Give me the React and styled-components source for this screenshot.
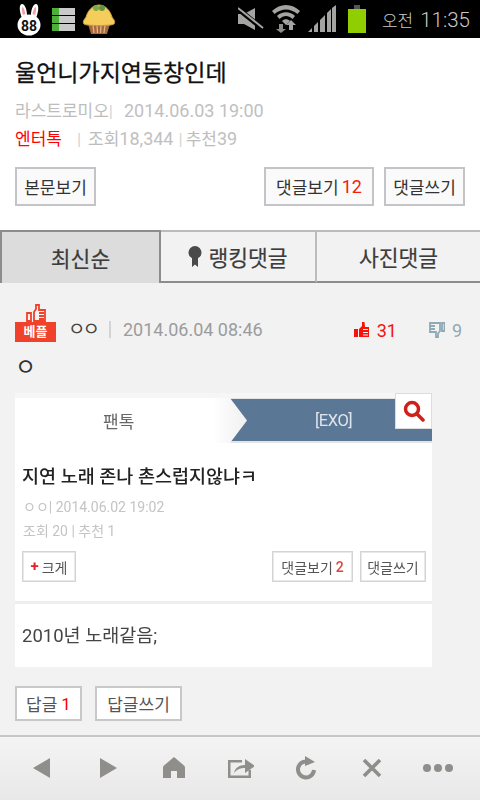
import React from 'react';
import styled, { createGlobalStyle } from 'styled-components';

const Global = createGlobalStyle`
  html, body { margin: 0; padding: 0; background: #f2f2f2; }
  body { width: 480px; height: 800px; overflow: hidden; font-family: Roboto, "Noto Sans CJK KR", sans-serif; }
  * { box-sizing: border-box; }
`;
const Page = styled.div`display: flex; flex-direction: column; width: 480px; height: 800px; background: #f2f2f2;`;

const StatusBar = styled.div`height: 38px; background: #000; display: flex; align-items: center; justify-content: space-between; padding: 0 10px 0 16px; flex: none;`;
const StatusGroup = styled.div`display: flex; align-items: center; gap: ${p => p.$gap}px;`;
const Clock = styled.div`color: #c9c9c9; font: 300 20.5px Roboto, "Noto Sans CJK KR", sans-serif; margin-left: 8px; white-space: nowrap;`;
const Clock1 = styled.span`font-size: 17px; margin-right: 7px;`;
const Stack = styled.div`display: flex; flex-direction: column; gap: 1px; width: 23px; margin: 0 7px 0 10px;`;
const StackRow = styled.div`height: 7px; background: linear-gradient(90deg, #4cb03a 0 7px, #c9c9c9 7px);`;
const BatterySlot = styled.div`display: flex; margin-left: 4px;`;

const Header = styled.header`background: #fff; padding: 20px 15px 0; height: 192px; flex: none;`;
const Title = styled.h1`margin: 0; font-size: 23px; font-weight: 400; line-height: 32px; color: #111; -webkit-text-stroke: 0.3px #111; white-space: nowrap;`;
const Meta = styled.div`margin-top: ${p => p.$top}px; font-size: 17px; line-height: 24px; color: #bdbdbd; white-space: nowrap; display: flex; align-items: baseline;`;
const Num = styled.span`font-size: 18px; color: #c0c0c0;`;
const Red = styled.span`color: #f00;`;
const Sep = styled.span`margin: ${p => p.$m}; color: #d4d4d4;`;
const ButtonRow = styled.div`display: flex; margin-top: 16px; gap: 10px;`;
const Btn = styled.div`height: 39px; width: ${p => p.$w}px; margin-right: ${p => p.$after || 0}px; border: 2px solid #c4c4c8; background: #fafafa; font-size: 17px; color: #333; display: flex; align-items: center; justify-content: center; white-space: nowrap;`;
const RedNum = styled.span`color: #f5200a; font-size: 18px; margin-left: 3px;`;

const Tabs = styled.nav`display: flex; height: 53px; flex: none;`;
const Tab = styled.div`
  width: ${p => p.$w}px; display: flex; align-items: center; justify-content: center; gap: 6px;
  font-size: 21.5px; color: #3c3c3c; white-space: nowrap; -webkit-text-stroke: 0.2px #3c3c3c;
  border-top: 2px solid ${p => p.$active ? '#8c8c8c' : '#bcbcbc'};
  border-right: 2px solid ${p => p.$active ? '#8c8c8c' : '#bcbcbc'};
  border-left: ${p => p.$active ? '2px solid #8c8c8c' : 'none'};
  border-bottom: ${p => p.$active ? 'none' : '2px solid #8c8c8c'};
  background: ${p => p.$active ? '#dcdcdc' : '#f2f2f2'};
  &:last-child { border-right: none; }
`;

const Comment = styled.section`flex: 1; padding: 19px 15px 0; min-height: 0;`;
const CommentHead = styled.div`display: flex; align-items: flex-end; height: 40px;`;
const BadgeWrap = styled.div`display: flex; flex-direction: column; align-items: center; width: 41px;`;
const Badge = styled.div`width: 41px; height: 20px; background: #f0412a; color: #fff; font-size: 13px; font-weight: 700; line-height: 20px; text-align: center;`;
const Author = styled.div`margin-left: 12px; font-size: 19px; line-height: 24px; color: #444; letter-spacing: -3px;`;
const HeadSep = styled.div`width: 2px; height: 17px; background: #d4d4d4; margin: 0 12px 4px 12px;`;
const HeadDate = styled.div`font-size: 18px; line-height: 24px; color: #9c9c9c; white-space: nowrap;`;
const Votes = styled.div`margin-left: auto; display: flex; align-items: center; height: 24px; padding-right: 3px;`;
const Vote = styled.div`display: flex; align-items: center; gap: 7px; font-size: 18px; color: ${p => p.$c}; margin-left: ${p => p.$ml || 0}px;`;
const Body = styled.div`margin: 10px 0 0 0; height: 32px; font-size: 23px; line-height: 32px; color: #333;`;

const Shot = styled.div`position: relative; width: 417px; height: 274px; margin-top: 9px; background: #fff; padding-top: 5px; filter: blur(0.5px); box-shadow: inset 0 5px 0 #f6f6f6;`;
const Crumb = styled.div`height: 45px; display: flex; border-top: 1px solid #e4e4e4; border-bottom: 2px solid #e4e4e4; position: relative; background: #5b7796;`;
const CrumbLeft = styled.div`width: 232px; background: linear-gradient(90deg, #fff, #fff 85%, #f0f0f0); clip-path: polygon(0 0, 215px 0, 100% 50%, 215px 100%, 0 100%); margin: -1px 0 -2px; display: flex; align-items: center; padding-left: 88px; font-size: 17px; color: #666;`;
const CrumbRight = styled.div`flex: 1; display: flex; align-items: center; padding-left: 68px; font-size: 16.5px; color: #dfe5ec; letter-spacing: -0.5px;`;
const SearchBox = styled.div`position: absolute; right: 0; top: 0; width: 37px; height: 36px; background: #fff; border: 1px solid #ddd; display: flex; align-items: center; justify-content: center;`;
const ShotTitle = styled.div`margin: 23px 0 0 7px; font-size: 18.5px; font-weight: 500; line-height: 22px; color: #222; white-space: nowrap;`;
const ShotMeta = styled.div`margin: ${p => p.$top}px 0 0 8px; font-size: 14px; line-height: 16px; color: #c4c4c4; white-space: nowrap;`;
const ShotBtns = styled.div`display: flex; margin: 12px 6px 0 7px; gap: 7px; align-items: center;`;
const ShotBtn = styled.div`height: 31px; width: ${p => p.$w}px; margin-right: ${p => p.$after || 0}px; border: 1px solid #d4d4d4; box-shadow: inset 0 0 0 1px #e8e8e8; font-size: 14px; color: #555; display: flex; align-items: center; justify-content: center; gap: 3px; white-space: nowrap;`;
const Plus = styled.span`color: #e0202a; font-weight: 700; font-size: 15px; line-height: 1;`;
const ShotNum = styled.span`color: #d9483a; font-weight: 500;`;
const ShotRule = styled.div`height: 3px; background: #eee; margin-top: 19px;`;
const ShotBody = styled.div`margin: 21px 0 0 7px; font-size: 18.5px; line-height: 22px; color: #444; white-space: nowrap;`;

const Replies = styled.div`display: flex; gap: 13px; margin-top: 19px;`;
const ReplyBtn = styled.div`height: 35px; width: ${p => p.$w}px; border: 2px solid #c8c8c8; background: #fff; font-size: 17px; color: #555; display: flex; align-items: center; justify-content: center; gap: 4px;`;

const BottomBar = styled.footer`height: 65px; flex: none; border-top: 2px solid #c6c6ca; background: linear-gradient(#f4f4f4, #e8e8e8); display: flex; align-items: center; padding: 0 8px 2px 9px;`;
const NavItem = styled.div`width: 66px; height: 34px; display: flex; align-items: center; justify-content: center;`;

const Rabbit = () => (
  <svg width="26" height="34" viewBox="0 0 26 34">
    <path d="M6 16C3 9 3 2 6 2s5 6 5 11zM20 16c3-7 3-14 0-14s-5 6-5 11z" fill="#fff" />
    <path d="M7 13C5.500 9 5.500 5 6.500 5S9 9 9.500 12zM19 13c1.500-4 1.500-8 .5-8S17 9 16.500 12z" fill="#f2a0a0" />
    <ellipse cx="13" cy="23" rx="11.500" ry="10.500" fill="#fff" />
    <text x="13" y="29" textAnchor="middle" fontSize="14" fontWeight="700" fontFamily="Roboto, sans-serif" fill="#111">88</text>
  </svg>
);
const Muffin = () => (
  <svg width="34" height="32" viewBox="0 0 34 32">
    <path d="M6 21h22l-3 10H9z" fill="#a9683a" />
    <path d="M11 22l1 8M15 22l.5 8M19 22l-.5 8M23 22l-1 8" stroke="#e0b58a" strokeWidth="1.300" />
    <path d="M2 21c-2-3 1-5 2-7C6 7 11 2 17 2s11 5 13 12c1 2 4 4 2 7-1 2-29 2-30 0z" fill="#f5cd5a" stroke="#c49a4a" strokeWidth="1" />
    <circle cx="14" cy="5" r="3" fill="#7ba84a" /><circle cx="20" cy="5" r="3" fill="#5f9440" />
  </svg>
);
const Mute = () => (
  <svg width="26" height="24" viewBox="0 0 26 24">
    <path d="M0 7h6l11-6v22L6 17H0z" fill="#a4a4a2" />
    <path d="M-1 1L25 22" stroke="#000" strokeWidth="5" /><path d="M0 1L25 21" stroke="#a4a4a2" strokeWidth="2" />
  </svg>
);
const Wifi = () => (
  <svg width="28" height="28" viewBox="0 0 28 28">
    <path d="M0 6C8-2 20-2 28 6l-2.500 3C18 3 10 3 2.500 9z" fill="#a4a4a2" />
    <path d="M5 11c5-5 13-5 18 0l-2.500 3c-4-4-9-4-13 0z" fill="#a4a4a2" />
    <path d="M10 16c2.500-2.500 5.500-2.500 8 0l-4 4z" fill="#a4a4a2" />
    <path d="M7 19h4v5h3l-5 4-5-4h3z" fill="#8c8c8a" /><path d="M19 15l5 5h-3v5h-4v-5h-3z" fill="#a4a4a2" />
  </svg>
);
const Signal = () => (
  <svg width="28" height="28" viewBox="0 0 28 28" fill="#a4a4a2">
    <path d="M0 27l4-4v4zM6 27v-6l4-4v10zM12 27V15l5-5v17zM19 27V8l4-4v23zM24 27V3l4-3v27z" />
  </svg>
);
const Battery = () => (
  <svg width="18" height="28" viewBox="0 0 18 28">
    <rect x="6" y="0" width="6" height="4" fill="#555" /><rect x="0" y="4" width="18" height="24" fill="#8fce00" />
  </svg>
);
const Ribbon = () => (
  <svg width="14" height="22" viewBox="0 0 14 22" fill="#4a4a4a">
    <circle cx="7" cy="6.500" r="6.500" /><path d="M4 12h6v9l-3-2.500L4 21z" />
  </svg>
);
const BigThumb = () => (
  <svg width="20" height="18" viewBox="0 0 20 18" fill="none" stroke="#f0412a" strokeWidth="1.800">
    <path d="M1 9h4v8H1zM8 8l2-3V1h3v5h6v11H8z" /><path d="M13 9h5M13 12h5M13 15h5" />
  </svg>
);
const ThumbUp = () => (
  <svg width="16" height="16" viewBox="0 0 16 16" fill="#f5120a">
    <path d="M0 7h4v8H0zM5 7l3-3V0h2.500l.5 5h4v10H5z" /><path d="M9 7.500h5M9 10.500h5M9 13h5" stroke="#f2f2f2" strokeWidth="1.200" />
  </svg>
);
const ThumbDown = () => (
  <svg width="16" height="16" viewBox="0 0 16 16" fill="none" stroke="#8fa9b5" strokeWidth="1.800">
    <path d="M1 1h10v8l-2 2.500V15H7v-5H1zM1 4h5M1 7h5M13 1h2.500v8H13z" />
  </svg>
);
const Magnifier = () => (
  <svg width="22" height="22" viewBox="0 0 22 22" fill="none" stroke="#d0201a" strokeWidth="3.500">
    <circle cx="9" cy="9" r="6.500" /><path d="M14 14l6 6" strokeLinecap="round" />
  </svg>
);
const G = '#8f8e8a';
const Prev = () => <svg width="20" height="22" viewBox="0 0 20 22" fill={G}><path d="M18 1v20L1 11z" /></svg>;
const Next = () => <svg width="20" height="22" viewBox="0 0 20 22" fill={G}><path d="M2 1v20l17-10z" /></svg>;
const Home = () => <svg width="24" height="22" viewBox="0 0 24 22" fill={G}><path d="M12 0l10 8.500c1 1 1 1.500 1 3V21H15v-7H9v7H1v-9.500c0-1.500 0-2 1-3z" /></svg>;
const Share = () => (
  <svg width="28" height="22" viewBox="-2 0 28 22" fill={G}>
    <path d="M0 3h14v2.500H2.500v13h18V13H23v8H0z" /><path d="M6 16c1-5 5-8 11-8V2l10 7-10 7v-5c-4 0-8 1-11 5z" />
  </svg>
);
const Reload = () => (
  <svg width="22" height="24" viewBox="0 0 22 24" fill="none" stroke={G} strokeWidth="4">
    <path d="M15 6.500A8 8 0 1 0 19 14" /><path d="M10 0l10 6-10 4z" fill={G} stroke="none" />
  </svg>
);
const Close = () => <svg width="20" height="20" viewBox="0 0 20 20" stroke={G} strokeWidth="3.600"><path d="M2 2l16 16M18 2L2 18" /></svg>;
const Dots = () => <svg width="32" height="10" viewBox="0 0 32 10" fill={G}><circle cx="5" cy="5" r="4" /><circle cx="16" cy="5" r="4" /><circle cx="27" cy="5" r="4" /></svg>;

export default function App() {
  return (
    <Page>
      <Global />
      <StatusBar>
        <StatusGroup $gap={0}>
          <Rabbit />
          <Stack><StackRow /><StackRow /><StackRow /></Stack>
          <Muffin />
        </StatusGroup>
        <StatusGroup $gap={8}>
          <Mute /><Wifi /><Signal /><BatterySlot><Battery /></BatterySlot>
          <Clock><Clock1>오전</Clock1>11:35</Clock>
        </StatusGroup>
      </StatusBar>

      <Header>
        <Title>울언니가지연동창인데</Title>
        <Meta $top={9}>라스트로미오<Sep $m="0 11px 0 0">|</Sep><Num>2014.06.03 19:00</Num></Meta>
        <Meta $top={4}><Red>엔터톡</Red><Sep $m="0 7px 0 15px">|</Sep>조회<Num>18,344</Num><Sep $m="0 3px 0 5px">|</Sep>추천<Num>39</Num></Meta>
        <ButtonRow>
          <Btn $w={81} $after={158}>본문보기</Btn>
          <Btn $w={110}>댓글보기<RedNum>12</RedNum></Btn>
          <Btn $w={81}>댓글쓰기</Btn>
        </ButtonRow>
      </Header>

      <Tabs>
        <Tab $active $w={161}>최신순</Tab>
        <Tab $w={156}><Ribbon />랭킹댓글</Tab>
        <Tab $w={163}>사진댓글</Tab>
      </Tabs>

      <Comment>
        <CommentHead>
          <BadgeWrap><BigThumb /><Badge>베플</Badge></BadgeWrap>
          <Author>ㅇㅇ</Author>
          <HeadSep />
          <HeadDate>2014.06.04 08:46</HeadDate>
          <Votes>
            <Vote $c="#f5120a"><ThumbUp />31</Vote>
            <Vote $c="#8fa9b5" $ml={32}><ThumbDown />9</Vote>
          </Votes>
        </CommentHead>
        <Body>ㅇ</Body>

        <Shot>
          <Crumb>
            <CrumbLeft>팬톡</CrumbLeft>
            <CrumbRight>[EXO]</CrumbRight>
          </Crumb>
          <SearchBox><Magnifier /></SearchBox>
          <ShotTitle>지연 노래 존나 촌스럽지않냐ㅋ</ShotTitle>
          <ShotMeta $top={11}>ㅇㅇ| 2014.06.02 19:02</ShotMeta>
          <ShotMeta $top={8}>조회 20 | 추천 1</ShotMeta>
          <ShotBtns>
            <ShotBtn $w={54} $after={189}><Plus>+</Plus>크게</ShotBtn>
            <ShotBtn $w={81}>댓글보기<ShotNum>2</ShotNum></ShotBtn>
            <ShotBtn $w={66}>댓글쓰기</ShotBtn>
          </ShotBtns>
          <ShotRule />
          <ShotBody>2010년 노래같음;</ShotBody>
        </Shot>

        <Replies>
          <ReplyBtn $w={67}>답글<Red>1</Red></ReplyBtn>
          <ReplyBtn $w={87}>답글쓰기</ReplyBtn>
        </Replies>
      </Comment>

      <BottomBar>
        <NavItem><Prev /></NavItem>
        <NavItem><Next /></NavItem>
        <NavItem><Home /></NavItem>
        <NavItem><Share /></NavItem>
        <NavItem><Reload /></NavItem>
        <NavItem><Close /></NavItem>
        <NavItem><Dots /></NavItem>
      </BottomBar>
    </Page>
  );
}
